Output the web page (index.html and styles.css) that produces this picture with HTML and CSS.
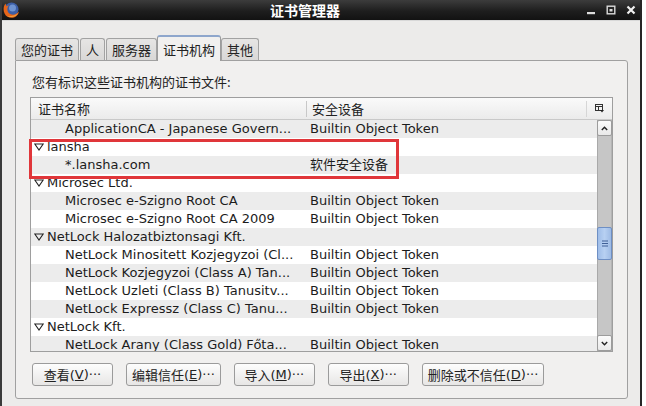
FILE: index.html
```html
<!DOCTYPE html>
<html>
<head>
<meta charset="utf-8">
<link rel="stylesheet" href="styles.css">
</head>
<body>
<div class="window">
  <div class="titlebar">
    <svg class="app-icon" width="18" height="18" viewBox="0 0 18 18">
      <circle cx="9.5" cy="8.5" r="7" fill="#3d5fa6"/>
      <circle cx="10.5" cy="7" r="3.5" fill="#6f93d0"/>
      <path d="M3.5 2.5 C0.5 6 1 13 5.5 15.8 C10 18.4 15.8 16 17 10.5 C14.5 14 9.5 14.8 6.8 12 C4.6 9.6 5 6 7.2 4.2 C6 4.3 5 4.8 4.4 5.6 C4.2 4.5 3.8 3.4 3.5 2.5 Z" fill="#e7661a"/>
      <path d="M5.2 15 C9 17.2 14.2 16 16.4 12 C13.8 14.6 9 15.2 5.2 15 Z" fill="#f2a23a"/>
    </svg>
    <div class="title">证书管理器</div>
    <div class="controls">
      <svg width="10" height="10" viewBox="0 0 10 10"><rect x="1" y="7" width="8" height="2.2" fill="#dcdcdc"/></svg>
      <svg width="10" height="10" viewBox="0 0 10 10"><rect x="1.2" y="1.2" width="7.6" height="7.6" fill="none" stroke="#dcdcdc" stroke-width="1.4"/><rect x="3.5" y="4" width="3" height="2.5" fill="#dcdcdc"/></svg>
      <svg width="10" height="10" viewBox="0 0 10 10"><path d="M1.5 1.5 L8.5 8.5 M8.5 1.5 L1.5 8.5" stroke="#f0f0f0" stroke-width="2.2"/></svg>
    </div>
  </div>
  <div class="content">
    <div class="tabs">
      <div class="tab">您的证书</div>
      <div class="tab">人</div>
      <div class="tab">服务器</div>
      <div class="tab active">证书机构</div>
      <div class="tab">其他</div>
    </div>
    <div class="panel">
      <div class="desc">您有标识这些证书机构的证书文件:</div>
      <div class="tree">
        <div class="tree-head">
          <div class="col1 head-cell">证书名称</div>
          <div class="col2 head-cell">安全设备</div>
          <div class="picker">
            <svg width="9" height="9" viewBox="0 0 9 9">
              <rect x="0.5" y="0.5" width="7" height="6" fill="none" stroke="#333" stroke-width="1"/>
              <line x1="0.5" y1="2.5" x2="7.5" y2="2.5" stroke="#333"/>
              <line x1="3.5" y1="2.5" x2="3.5" y2="6.5" stroke="#333"/>
              <path d="M5 6 L9 6 L7 8.5 Z" fill="#222"/>
            </svg>
          </div>
        </div>
        <div class="tree-body">
          <div class="rows">
            <div class="row odd"><div class="col1 child">ApplicationCA - Japanese Govern...</div><div class="col2">Builtin Object Token</div></div>
            <div class="row"><div class="col1 group"><svg class="twisty" width="10" height="8" viewBox="0 0 10 8"><path d="M0.8 1 L9.2 1 L5 7 Z" fill="none" stroke="#222" stroke-width="1.1"/></svg>lansha</div><div class="col2"></div></div>
            <div class="row odd"><div class="col1 child">*.lansha.com</div><div class="col2">软件安全设备</div></div>
            <div class="row"><div class="col1 group"><svg class="twisty" width="10" height="8" viewBox="0 0 10 8"><path d="M0.8 1 L9.2 1 L5 7 Z" fill="none" stroke="#222" stroke-width="1.1"/></svg>Microsec Ltd.</div><div class="col2"></div></div>
            <div class="row odd"><div class="col1 child">Microsec e-Szigno Root CA</div><div class="col2">Builtin Object Token</div></div>
            <div class="row"><div class="col1 child">Microsec e-Szigno Root CA 2009</div><div class="col2">Builtin Object Token</div></div>
            <div class="row odd"><div class="col1 group"><svg class="twisty" width="10" height="8" viewBox="0 0 10 8"><path d="M0.8 1 L9.2 1 L5 7 Z" fill="none" stroke="#222" stroke-width="1.1"/></svg>NetLock Halozatbiztonsagi Kft.</div><div class="col2"></div></div>
            <div class="row"><div class="col1 child">NetLock Minositett Kozjegyzoi (Cl...</div><div class="col2">Builtin Object Token</div></div>
            <div class="row odd"><div class="col1 child">NetLock Kozjegyzoi (Class A) Tan...</div><div class="col2">Builtin Object Token</div></div>
            <div class="row"><div class="col1 child">NetLock Uzleti (Class B) Tanusitv...</div><div class="col2">Builtin Object Token</div></div>
            <div class="row odd"><div class="col1 child">NetLock Expressz (Class C) Tanu...</div><div class="col2">Builtin Object Token</div></div>
            <div class="row"><div class="col1 group"><svg class="twisty" width="10" height="8" viewBox="0 0 10 8"><path d="M0.8 1 L9.2 1 L5 7 Z" fill="none" stroke="#222" stroke-width="1.1"/></svg>NetLock Kft.</div><div class="col2"></div></div>
            <div class="row odd"><div class="col1 child">NetLock Arany (Class Gold) Főta...</div><div class="col2">Builtin Object Token</div></div>
          </div>
          <div class="scrollbar">
            <div class="sb-btn">
              <svg width="7" height="5" viewBox="0 0 7 5"><path d="M0.8 4 L3.5 1.2 L6.2 4" fill="none" stroke="#222" stroke-width="1.4"/></svg>
            </div>
            <div class="sb-track">
              <div class="sb-thumb">
                <svg width="6" height="7" viewBox="0 0 6 7"><path d="M0 1 H6 M0 3.5 H6 M0 6 H6" stroke="#3f5f96" stroke-width="1"/></svg>
              </div>
            </div>
            <div class="sb-btn">
              <svg width="7" height="5" viewBox="0 0 7 5"><path d="M0.8 1 L3.5 3.8 L6.2 1" fill="none" stroke="#222" stroke-width="1.4"/></svg>
            </div>
          </div>
        </div>
        <div class="highlight"></div>
      </div>
      <div class="buttons">
        <div class="btn">查看(<u>V</u>)···</div>
        <div class="btn">编辑信任(<u>E</u>)···</div>
        <div class="btn">导入(<u>M</u>)···</div>
        <div class="btn">导出(<u>X</u>)···</div>
        <div class="btn">删除或不信任(<u>D</u>)···</div>
      </div>
    </div>
  </div>
</div>
</body>
</html>
```

FILE: styles.css
```css
html, body {
  margin: 0;
  padding: 0;
}
body {
  background: #ffffff;
  font-family: "DejaVu Sans", "Noto Sans CJK SC", sans-serif;
  font-size: 13px;
  color: #1c1c1c;
}
.window {
  width: 638px;
  height: 406px;
  border-left: 2px solid #3a3a3a;
  border-right: 2px solid #262626;
  background: #ecebea;
  display: flex;
  flex-direction: column;
  overflow: hidden;
}
.titlebar {
  height: 20px;
  flex: none;
  display: flex;
  align-items: center;
  background: linear-gradient(#3c3c3c, #1e1e1e 55%, #121212);
  border-bottom: 1px solid #d8d8d8;
}
.app-icon {
  flex: none;
  margin-top: -1px;
}
.title {
  flex: 1;
  text-align: center;
  color: #ffffff;
  font-family: "Noto Sans CJK SC", sans-serif;
  font-weight: bold;
  font-size: 14px;
  line-height: 20px;
  padding-left: 4px;
}
.controls {
  flex: none;
  display: flex;
  align-items: center;
  gap: 10px;
  padding-right: 4px;
}
.controls svg {
  display: block;
}
.content {
  flex: 1;
  padding: 13px 0 0 13px;
  display: flex;
  flex-direction: column;
}
.tabs {
  display: flex;
  align-items: flex-end;
  height: 26px;
  gap: 1px;
  position: relative;
  z-index: 1;
}
.tab {
  height: 21px;
  line-height: 21px;
  padding: 0 5px;
  border: 1px solid #a2a2a2;
  border-bottom: none;
  border-radius: 3px 3px 0 0;
  background: linear-gradient(#e6e5e4, #d9d8d7);
  font-family: "Noto Sans CJK SC", sans-serif;
  color: #222;
}
.tab.active {
  height: 24px;
  line-height: 25px;
  margin-bottom: -1px;
  margin-left: -1px;
  margin-right: -1px;
  background: #f1f0ef;
  border-color: #9c9c9c;
  border-top: 2px solid #8ea6cc;
}
.panel {
  border: 1px solid #a0a0a0;
  border-radius: 0 3px 3px 3px;
  background: #f1f0ef;
  padding: 12px 14px 0 14px;
  box-sizing: border-box;
  width: 613px;
  height: 339px;
  display: flex;
  flex-direction: column;
}
.desc {
  height: 18px;
  line-height: 18px;
  padding-left: 2px;
  margin-bottom: 6px;
  font-family: "Noto Sans CJK SC", sans-serif;
  color: #222;
}
.tree {
  position: relative;
  height: 255px;
  width: 583px;
  box-sizing: border-box;
  border: 1px solid #9e9e9e;
  background: #ffffff;
  display: flex;
  flex-direction: column;
}
.tree-head {
  height: 22px;
  flex: none;
  display: flex;
  align-items: center;
  background: linear-gradient(#fafafa, #ebebeb);
  border-bottom: 1px solid #c9c9c9;
  box-sizing: border-box;
}
.head-cell {
  font-family: "Noto Sans CJK SC", sans-serif;
  color: #222;
}
.tree-head .col1 {
  width: 276px;
  padding-left: 7px;
  box-sizing: border-box;
  border-right: 1px solid #c8c8c8;
  height: 16px;
  line-height: 16px;
}
.tree-head .col2 {
  flex: 1;
  padding-left: 5px;
  height: 16px;
  line-height: 16px;
  border-right: 1px solid #d6d6d6;
}
.picker {
  width: 25px;
  display: flex;
  justify-content: center;
  align-items: center;
}
.picker svg {
  display: block;
}
.tree-body {
  flex: 1;
  display: flex;
  overflow: hidden;
}
.rows {
  flex: 1;
  overflow: hidden;
}
.row {
  height: 18px;
  display: flex;
  align-items: center;
  background: #ffffff;
  white-space: nowrap;
}
.row.odd {
  background: #ececec;
}
.row .col1 {
  width: 279px;
  flex: none;
  display: flex;
  align-items: center;
  overflow: hidden;
  line-height: 18px;
}
.row .col2 {
  flex: 1;
  line-height: 18px;
}
.col1.child {
  padding-left: 34px;
  box-sizing: border-box;
}
.col1.group {
  padding-left: 3px;
  box-sizing: border-box;
}
.twisty {
  display: block;
  margin-right: 3px;
  flex: none;
}
.scrollbar {
  width: 15px;
  flex: none;
  display: flex;
  flex-direction: column;
  background: #c6c6c6;
  border-left: 1px solid #a9a9a9;
  border-right: 1px solid #b4b4b4;
  box-sizing: border-box;
}
.sb-btn {
  height: 16px;
  flex: none;
  display: flex;
  align-items: center;
  justify-content: center;
  background: linear-gradient(#fbfbfb, #e9e9e9);
  border: 1px solid #9c9c9c;
  border-radius: 2px;
  box-sizing: border-box;
  margin: 0 -1px;
}
.sb-btn svg {
  display: block;
}
.sb-track {
  flex: 1;
  position: relative;
}
.sb-thumb {
  position: absolute;
  left: -1px;
  right: -1px;
  top: 91px;
  height: 33px;
  background: linear-gradient(90deg, #9fbde8, #b7d0f2 50%, #9ebbe5);
  border: 1px solid #6e8fc4;
  border-radius: 2px;
  box-sizing: border-box;
  display: flex;
  align-items: center;
  justify-content: center;
}
.sb-thumb svg {
  display: block;
}
.highlight {
  position: absolute;
  left: -2px;
  top: 41px;
  width: 370px;
  height: 40px;
  border: 3px solid #e0363a;
  box-sizing: border-box;
  pointer-events: none;
}
.buttons {
  display: flex;
  gap: 13px;
  margin-top: 11px;
  padding-left: 2px;
}
.btn {
  height: 23px;
  min-width: 81px;
  padding: 0 5px;
  box-sizing: border-box;
  border: 1px solid #9b9b9b;
  border-radius: 3px;
  background: linear-gradient(#fdfdfd, #e7e6e5);
  display: flex;
  align-items: center;
  justify-content: center;
  font-family: "DejaVu Sans", "Noto Sans CJK SC", sans-serif;
  color: #222;
  white-space: nowrap;
}
.btn u {
  text-decoration: underline;
}
```
